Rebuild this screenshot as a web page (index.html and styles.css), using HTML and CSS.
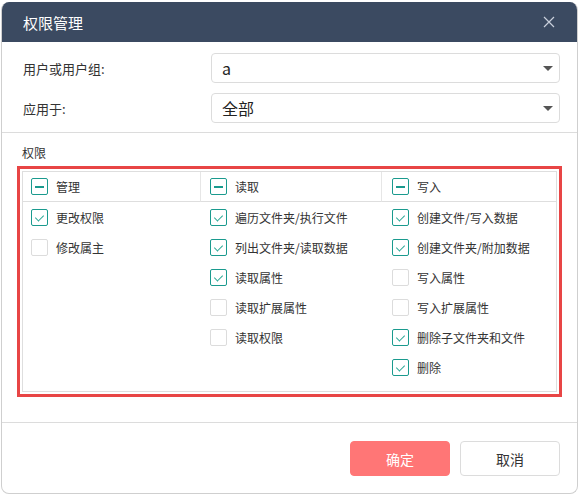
FILE: index.html
```html
<!DOCTYPE html>
<html lang="zh">
<head>
<meta charset="utf-8">
<link rel="stylesheet" href="styles.css">
</head>
<body>
<div class="dialog">
  <div class="header">
    <span class="title">权限管理</span>
    <svg class="close" width="12" height="12" viewBox="0 0 12 12"><path d="M1 1L11 11M11 1L1 11" stroke="#c9d0dc" stroke-width="1.2" fill="none"/></svg>
  </div>
  <div class="form">
    <div class="row">
      <label class="lbl">用户或用户组:</label>
      <div class="select"><span>a</span><i class="caret"></i></div>
    </div>
    <div class="row">
      <label class="lbl">应用于:</label>
      <div class="select"><span>全部</span><i class="caret"></i></div>
    </div>
  </div>
  <div class="perm">
    <div class="perm-title">权限</div>
    <div class="redbox">
      <div class="grid">
        <div class="col">
          <div class="head"><span class="cb ind"></span>管理</div>
          <div class="items">
            <div class="item"><span class="cb on"></span>更改权限</div>
            <div class="item"><span class="cb"></span>修改属主</div>
          </div>
        </div>
        <div class="col">
          <div class="head"><span class="cb ind"></span>读取</div>
          <div class="items">
            <div class="item"><span class="cb on"></span>遍历文件夹/执行文件</div>
            <div class="item"><span class="cb on"></span>列出文件夹/读取数据</div>
            <div class="item"><span class="cb on"></span>读取属性</div>
            <div class="item"><span class="cb"></span>读取扩展属性</div>
            <div class="item"><span class="cb"></span>读取权限</div>
          </div>
        </div>
        <div class="col">
          <div class="head"><span class="cb ind"></span>写入</div>
          <div class="items">
            <div class="item"><span class="cb on"></span>创建文件/写入数据</div>
            <div class="item"><span class="cb on"></span>创建文件夹/附加数据</div>
            <div class="item"><span class="cb"></span>写入属性</div>
            <div class="item"><span class="cb"></span>写入扩展属性</div>
            <div class="item"><span class="cb on"></span>删除子文件夹和文件</div>
            <div class="item"><span class="cb on"></span>删除</div>
          </div>
        </div>
      </div>
    </div>
  </div>
  <div class="footer">
    <button class="btn primary">确定</button>
    <button class="btn">取消</button>
  </div>
</div>
</body>
</html>
```
FILE: styles.css
```css
* { box-sizing: border-box; }
html, body { margin: 0; padding: 0; }
body {
  background: #ffffff;
  font-family: "Noto Sans CJK SC", "Noto Sans", sans-serif;
  color: #333;
  width: 582px;
  height: 498px;
  overflow: hidden;
  padding: 2px 4px 0 1px;
}
.dialog {
  width: 577px;
  height: 492px;
  background: #fff;
  border: 1px solid #cfcfcf;
  border-top: none;
  border-radius: 8px;
  overflow: hidden;
  display: flex;
  flex-direction: column;
}
.header {
  height: 40px;
  background: #3b4a61;
  display: flex;
  align-items: center;
  justify-content: space-between;
  padding: 0 22px 0 21px;
  flex-shrink: 0;
}
.title { color: #fff; font-size: 15px; }
.close { display: block; }
.form {
  padding: 11px 17px 0 21px;
  border-bottom: 1px solid #dcdcdc;
  height: 91px;
}
.row {
  display: flex;
  align-items: center;
  height: 30px;
  margin-bottom: 10px;
}
.lbl { width: 188px; font-size: 13px; color: #333; }
.select {
  flex: 1;
  height: 30px;
  border: 1px solid #dcdcdc;
  border-radius: 4px;
  display: flex;
  align-items: center;
  justify-content: space-between;
  padding: 0 6px 0 10px;
  font-size: 16px;
  color: #222;
}
.caret {
  width: 0; height: 0;
  border-left: 5px solid transparent;
  border-right: 5px solid transparent;
  border-top: 5px solid #555;
}
.perm { padding: 11px 0 0 15px; height: 290px; border-bottom: 1px solid #dcdcdc; }
.perm-title { font-size: 12px; color: #333; height: 22px; padding-left: 5px; }
.redbox {
  width: 545px;
  height: 231px;
  border: 3px solid #e84545;
  padding: 2px;
}
.grid {
  height: 100%;
  border: 1px solid #dedede;
  display: grid;
  grid-template-columns: 178px 181px 1fr;
}
.head {
  height: 30px;
  border-bottom: 1px solid #dedede;
  border-right: 1px solid #e6e6e6;
  display: flex;
  align-items: center;
  padding-left: 8px;
  font-size: 12px;
  color: #333;
}
.col:last-child .head { border-right: none; }
.item {
  height: 30px;
  display: flex;
  align-items: center;
  padding-left: 8px;
  font-size: 12px;
  color: #333;
}
.col:nth-child(2) .head, .col:nth-child(2) .item { padding-left: 9px; }
.col:nth-child(3) .head, .col:nth-child(3) .item { padding-left: 10px; }
.cb {
  width: 17px; height: 17px;
  border: 1px solid #dcdcdc;
  border-radius: 2px;
  margin-right: 8px;
  position: relative;
  flex-shrink: 0;
}
.cb.on, .cb.ind { border-color: #1a9a8e; }
.cb.on::after {
  content: "";
  position: absolute;
  left: 5px; top: 3px;
  width: 4px; height: 7px;
  border-right: 1.2px solid #2aa896;
  border-bottom: 1.2px solid #2aa896;
  transform: rotate(45deg);
}
.cb.ind::after {
  content: "";
  position: absolute;
  left: 3px; top: 7px;
  width: 9px; height: 1.5px;
  background: #1a9a8e;
}
.footer {
  flex: 1;
  display: flex;
  justify-content: flex-end;
  align-items: flex-start;
  gap: 10px;
  padding: 18px 17px 0 0;
}
.btn {
  width: 100px;
  height: 35px;
  border: 1px solid #dcdcdc;
  border-radius: 4px;
  background: #fff;
  font-family: inherit;
  font-size: 14px;
  color: #333;
}
.btn.primary { background: #ff7676; border-color: #ff7676; color: #fff; }
```
